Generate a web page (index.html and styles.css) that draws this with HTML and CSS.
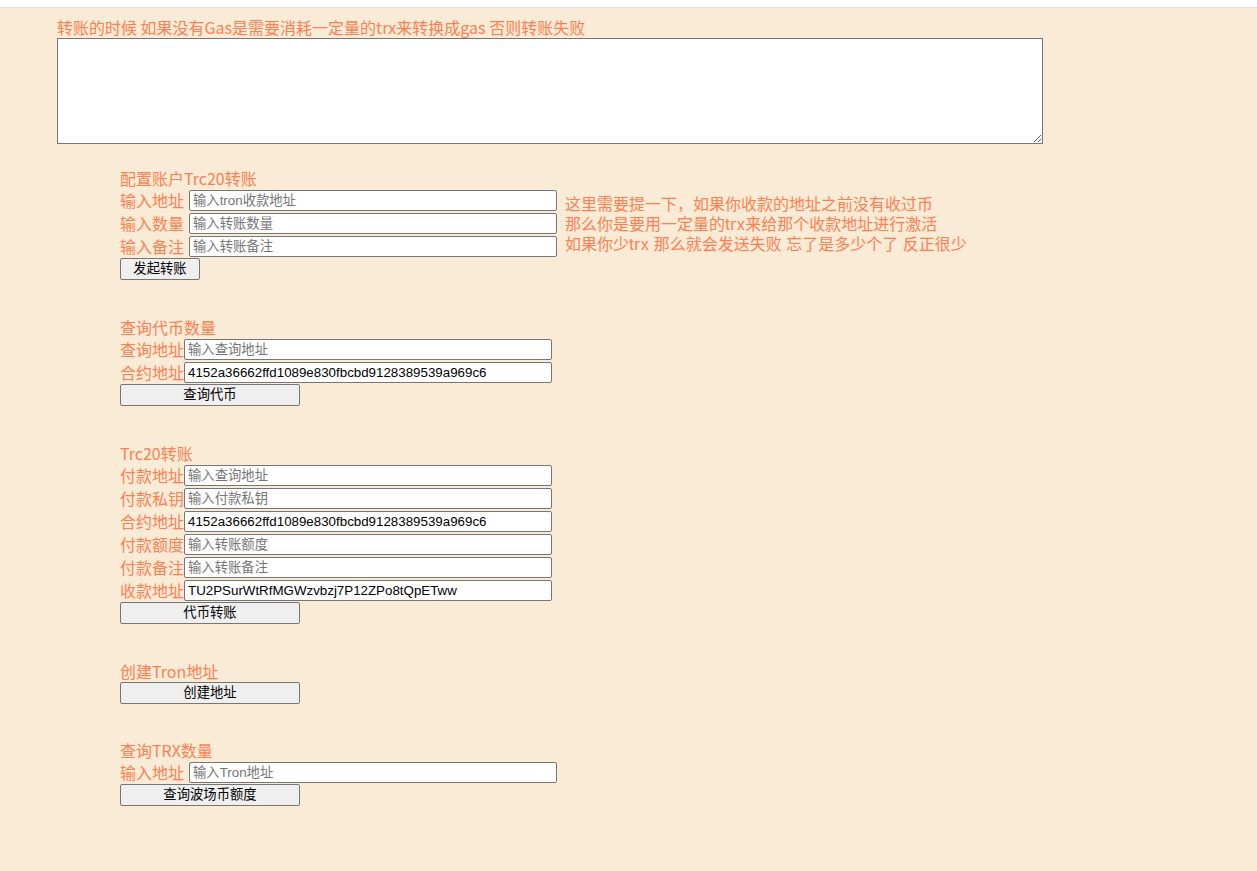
FILE: index.html
```html
<!DOCTYPE html>
<html lang="zh-CN">
<head>
<meta charset="utf-8">
<title>Tron</title>
<link rel="stylesheet" href="styles.css">
</head>
<body>
<div class="topbar"></div>
<div class="intro">
  <div class="intro-text">转账的时候 如果没有Gas是需要消耗一定量的trx来转换成gas 否则转账失败</div>
  <textarea class="log"></textarea>
</div>
<div class="main">
  <div class="section first">
    <div class="title">配置账户Trc20转账</div>
    <div class="split">
      <div class="fields">
        <div class="row"><span class="label">输入地址</span><span class="sp"></span><input class="field" placeholder="输入tron收款地址"></div>
        <div class="row"><span class="label">输入数量</span><span class="sp"></span><input class="field" placeholder="输入转账数量"></div>
        <div class="row"><span class="label">输入备注</span><span class="sp"></span><input class="field" placeholder="输入转账备注"></div>
        <button class="btn btn-small">发起转账</button>
      </div>
      <div class="notes">
        <div class="note">这里需要提一下，如果你收款的地址之前没有收过币</div>
        <div class="note">那么你是要用一定量的trx来给那个收款地址进行激活</div>
        <div class="note">如果你少trx 那么就会发送失败 忘了是多少个了 反正很少</div>
      </div>
    </div>
  </div>

  <div class="section">
    <div class="title">查询代币数量</div>
    <div class="row"><span class="label">查询地址</span><input class="field" placeholder="输入查询地址"></div>
    <div class="row"><span class="label">合约地址</span><input class="field" value="4152a36662ffd1089e830fbcbd9128389539a969c6"></div>
    <button class="btn">查询代币</button>
  </div>

  <div class="section">
    <div class="title">Trc20转账</div>
    <div class="row"><span class="label">付款地址</span><input class="field" placeholder="输入查询地址"></div>
    <div class="row"><span class="label">付款私钥</span><input class="field" placeholder="输入付款私钥"></div>
    <div class="row"><span class="label">合约地址</span><input class="field" value="4152a36662ffd1089e830fbcbd9128389539a969c6"></div>
    <div class="row"><span class="label">付款额度</span><input class="field" placeholder="输入转账额度"></div>
    <div class="row"><span class="label">付款备注</span><input class="field" placeholder="输入转账备注"></div>
    <div class="row"><span class="label">收款地址</span><input class="field" value="TU2PSurWtRfMGWzvbzj7P12ZPo8tQpETww"></div>
    <button class="btn">代币转账</button>
  </div>

  <div class="section">
    <div class="title">创建Tron地址</div>
    <button class="btn">创建地址</button>
  </div>

  <div class="section last">
    <div class="title">查询TRX数量</div>
    <div class="row"><span class="label">输入地址</span><span class="sp"></span><input class="field" placeholder="输入Tron地址"></div>
    <button class="btn">查询波场币额度</button>
  </div>
</div>
</body>
</html>
```

FILE: styles.css
```css
html, body {
  margin: 0;
  padding: 0;
}

body {
  background: #faebd7;
  color: #ff7f50;
  font-family: "Noto Sans CJK SC", "Liberation Sans", sans-serif;
  font-size: 16px;
  min-height: 871px;
}

.topbar {
  height: 7px;
  background: #ffffff;
  border-bottom: 1px solid #dcdee3;
}

.intro {
  padding: 9px 0 0 57px;
}

.intro-text {
  line-height: 21px;
  height: 21px;
  white-space: nowrap;
}

.log {
  display: block;
  box-sizing: border-box;
  width: 986px;
  height: 106px;
  margin: 0;
  background: #ffffff;
  border: 1px solid #767676;
  border-radius: 0;
  padding: 2px;
  font-family: "Liberation Mono", monospace;
  font-size: 13px;
}

.main {
  padding-left: 120px;
  padding-bottom: 40px;
}

.section {
  margin-top: 37px;
}

.section.first {
  margin-top: 24px;
}

.section.last {
  margin-top: 36px;
}

.title {
  line-height: 21px;
  height: 21px;
  white-space: nowrap;
}

.split {
  display: flex;
  align-items: flex-start;
}

.fields {
  display: flex;
  flex-direction: column;
  align-items: flex-start;
}

.notes {
  margin-left: 8px;
  margin-top: 5px;
  display: flex;
  flex-direction: column;
}

.note {
  font-family: "Inter", "Noto Sans CJK SC", sans-serif;
  line-height: 20px;
  height: 20px;
  white-space: nowrap;
}

.row {
  display: flex;
  align-items: center;
  height: 23px;
  white-space: nowrap;
}

.label {
  line-height: 21px;
}

.sp {
  display: inline-block;
  width: 5px;
}

.field {
  box-sizing: border-box;
  width: 368px;
  height: 21px;
  margin: 0;
  padding: 1px 3px;
  background: #ffffff;
  border: 1px solid #767676;
  border-radius: 2px;
  color: #000000;
  font-family: "Liberation Sans", "Noto Sans CJK SC", sans-serif;
  font-size: 13.33px;
  line-height: 17px;
}

.field::placeholder {
  color: #757575;
}

.btn {
  display: block;
  box-sizing: border-box;
  width: 180px;
  height: 22px;
  margin: 0;
  padding: 0 6px;
  background: #efefef;
  border: 1px solid #767676;
  border-radius: 2px;
  color: #000000;
  font-family: "Liberation Sans", "Noto Sans CJK SC", sans-serif;
  font-size: 13.33px;
  line-height: 18px;
  text-align: center;
}

.btn-small {
  width: 80px;
}
```
